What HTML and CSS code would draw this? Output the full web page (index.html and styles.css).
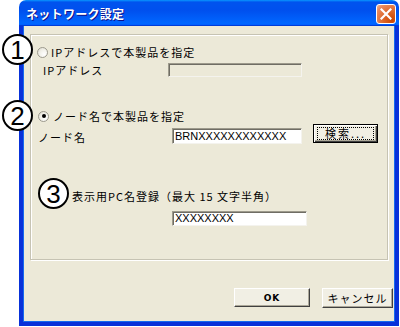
FILE: index.html
```html
<!DOCTYPE html>
<html lang="ja">
<head>
<meta charset="utf-8">
<title>ネットワーク設定</title>
<link rel="stylesheet" href="styles.css">
</head>
<body>
<div class="window">
  <div class="titlebar">
    <span class="title">ネットワーク設定</span>
    <span class="close"><svg width="12" height="12" viewBox="0 0 12 12"><path d="M1.5 1.5 L10.5 10.5 M10.5 1.5 L1.5 10.5" stroke="#fff" stroke-width="2.2" stroke-linecap="square"/></svg></span>
  </div>
  <div class="content">
    <div class="group">
      <div class="row r1"><span class="radio"></span><span class="txt">IPアドレスで本製品を指定</span></div>
      <div class="row r2"><span class="label l2">IPアドレス</span><span class="field disabled w2"></span></div>
      <div class="row r3"><span class="radio checked"></span><span class="txt t3">ノード名で本製品を指定</span></div>
      <div class="row r4"><span class="label l4">ノード名</span><span class="field w4">BRNXXXXXXXXXXXX</span><span class="btn btn-search"><span class="focus">検索...</span></span></div>
      <div class="row r5"><span class="txt">表示用PC名登録（最大 15 文字半角）</span></div>
      <div class="row r6"><span class="field w6">XXXXXXXX</span></div>
    </div>
    <div class="buttons">
      <span class="btn btn-ok">OK</span>
      <span class="btn btn-cancel">キャンセル</span>
    </div>
  </div>
</div>
<span class="badge b1">1</span>
<span class="badge b2">2</span>
<span class="badge b3">3</span>
</body>
</html>
```
FILE: styles.css
```css
html, body {
  margin: 0;
  padding: 0;
  background: #fff;
  width: 400px;
  height: 327px;
  overflow: hidden;
  font-family: "Noto Sans CJK JP", "Liberation Sans", sans-serif;
  font-size: 11px;
  color: #000;
}
.window {
  margin-left: 19px;
  width: 380px;
  height: 326px;
  display: flex;
  flex-direction: column;
}
.titlebar {
  height: 26px;
  flex: none;
  border-radius: 7px 7px 0 0;
  background: linear-gradient(180deg, #0997ff, #0053ee 8%, #0050ee 40%, #06f 88%, #06f 93%, #005bff 95%, #003dd7 96%, #003dd7);
  display: flex;
  align-items: center;
  justify-content: space-between;
  padding: 0 3px 0 7px;
  box-sizing: border-box;
}
.title {
  color: #fff;
  font-weight: bold;
  font-size: 12px;
  letter-spacing: 0.3px;
  text-shadow: 1px 1px 0 #0f1089;
  margin-top: 1px;
}
.close {
  width: 20px;
  height: 20px;
  box-sizing: border-box;
  border: 1px solid #fff;
  border-radius: 3px;
  background: radial-gradient(circle at 85% 85%, #cc4600 0%, #dc6527 40%, #e98a5e 80%, #f2b59b 100%);
  display: flex;
  align-items: center;
  justify-content: center;
  margin-top: 1px;
}
.content {
  flex: 1;
  background: #ece9d8;
  border: 4px solid #0831d9;
  border-top: 0;
  box-shadow: inset 1px 0 0 #166aee, inset -1px 0 0 #166aee, inset 0 -1px 0 #166aee;
  display: flex;
  flex-direction: column;
}
.group {
  margin: 8px 7px 0;
  height: 226px;
  box-sizing: border-box;
  border: 1px solid #c6c3b3;
  box-shadow: 1px 1px 0 #fff, inset 1px 1px 0 #fff;
  display: flex;
  flex-direction: column;
}
.row {
  display: flex;
  align-items: center;
  height: 14px;
  letter-spacing: 1px;
  white-space: nowrap;
}
.r1 { margin-top: 10px; padding-left: 6px; }
.r2 { margin-top: 4px; padding-left: 12px; }
.r3 { margin-top: 32px; padding-left: 7px; }
.r4 { margin-top: 1px; padding-left: 7px; height: 21px; align-items: flex-start; }
.r5 { margin-top: 44px; padding-left: 41px; }
.r6 { margin-top: 8px; padding-left: 141px; height: 15px; }
.radio {
  width: 11px;
  height: 11px;
  box-sizing: border-box;
  border-radius: 50%;
  border: 1px solid #9c9a8e;
  background: radial-gradient(circle at 70% 70%, #fff 0%, #f2f1ea 50%, #dcd9cc 100%);
  margin-right: 3px;
  display: flex;
  align-items: center;
  justify-content: center;
  flex: none;
}
.radio.checked::after {
  content: "";
  width: 4px;
  height: 4px;
  border-radius: 50%;
  background: #000;
}
.t3 { margin-left: 1px; }
.label { flex: none; }
.l2 { width: 125px; }
.l4 { width: 134px; line-height: 14px; margin-top: 6px; }
.field {
  box-sizing: border-box;
  border: 1px solid;
  border-color: #9d9a8c #f4f3ee #f4f3ee #9d9a8c;
  box-shadow: inset 1px 1px 0 #6f6d64;
  background: #fff;
  font-family: "Liberation Sans", Arial, sans-serif;
  font-size: 11px;
  letter-spacing: 0;
  line-height: 13px;
  padding-left: 2px;
  display: flex;
  align-items: center;
  flex: none;
}
.disabled { background: #ece9d8; }
.w2 { width: 134px; height: 14px; }
.w4 { width: 130px; height: 16px; margin-top: 4px; }
.w6 { width: 135px; height: 15px; }
.btn {
  box-sizing: border-box;
  display: flex;
  align-items: center;
  justify-content: center;
  background: #f1efe4;
  border: 1px solid;
  border-color: #fff #404040 #404040 #fff;
  box-shadow: inset -1px -1px 0 #aca899;
  letter-spacing: 1px;
  flex: none;
}
.btn-search {
  width: 65px;
  height: 19px;
  margin-left: 11px;
  border: 1px solid #000;
  box-shadow: inset 1px 1px 0 #fff, inset -1px -1px 0 #404040, inset -2px -2px 0 #aca899;
}
.focus {
  border: 1px dotted #000;
  height: 13px;
  width: 57px;
  box-sizing: border-box;
  line-height: 11px;
  text-align: center;
  letter-spacing: 2px;
  display: block;
}
.buttons {
  margin-top: 28px;
  display: flex;
  justify-content: flex-end;
  gap: 12px;
  padding-right: 2px;
}
.btn-ok {
  width: 76px;
  height: 19px;
  font-family: "DejaVu Sans", sans-serif;
  font-size: 9px;
  font-weight: bold;
}
.btn-cancel {
  width: 71px;
  height: 20px;
}
.badge {
  position: absolute;
  width: 31px;
  height: 31px;
  box-sizing: border-box;
  border: 2.5px solid #000;
  border-radius: 50%;
  background: #fff;
  display: flex;
  align-items: center;
  justify-content: center;
  font-family: "Liberation Sans", Arial, sans-serif;
  font-size: 26px;
  line-height: 1;
  padding-top: 1px;
}
.b1 { left: 2px; top: 34px; }
.b2 { left: 2px; top: 100px; }
.b3 { left: 38px; top: 178px; }
```
